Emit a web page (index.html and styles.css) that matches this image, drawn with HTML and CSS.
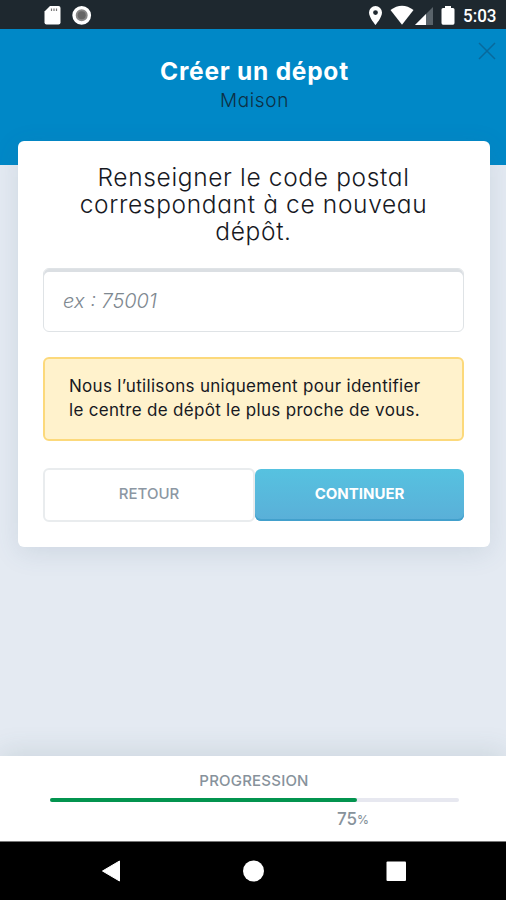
FILE: index.html
```html
<!DOCTYPE html>
<html lang="fr">
<head>
    <meta charset="UTF-8">
    <meta name="viewport" content="width=device-width, initial-scale=1.0">
    <title>Créer un dépot</title>
    <link rel="stylesheet" href="styles.css">
</head>
<body>
    <div class="status-bar">
        <svg width="506" height="29" viewBox="0 0 506 29">
            <path fill="#fff" d="M50 6h8.500q2 0 2 2v14.500q0 2-2 2h-12q-2 0-2-2V11.500z"/>
            <path stroke="#777" stroke-width="1.200" d="M51.500 8.500v2.500M54 8.500v2.500M56.500 8.500v2.500"/>
            <circle cx="81.700" cy="15.300" r="7.700" fill="#888" stroke="#fff" stroke-width="3.400"/>
            <circle cx="81.700" cy="15.300" r="4" fill="#666"/>
            <path fill="#fff" fill-rule="evenodd" d="M375.500 6a6.500 6.500 0 0 0-6.500 6.500c0 5 6.500 12.500 6.500 12.500s6.500-7.500 6.500-12.500a6.500 6.500 0 0 0-6.500-6.500zm0 4.200a2.400 2.400 0 1 1 0 4.800 2.400 2.400 0 0 1 0-4.800z"/>
            <path fill="#fff" d="M390.500 10q11.500-8.500 23 0L402 24.800z"/>
            <path fill="#59636a" d="M433 7v18h-18z"/>
            <path fill="#fff" d="M426 14v11h-11z"/>
            <path fill="#fff" d="M445 6h6v2h2q1.500 0 1.500 1.500V23q0 1.800-1.500 1.800h-10q-1.500 0-1.500-1.800V9.500Q441.500 8 443 8h2z"/>
            <text class="clock" x="463" y="22.300" textLength="33.500" lengthAdjust="spacingAndGlyphs">5:03</text>
        </svg>
    </div>

    <header class="header">
        <button class="close" aria-label="Fermer">
            <svg width="18" height="18" viewBox="0 0 18 18">
                <path d="M1 1l16 16M17 1L1 17" stroke="#08699c" stroke-width="1.500"/>
            </svg>
        </button>
        <h1>Créer un dépot</h1>
        <p>Maison</p>
    </header>

    <main class="card">
        <h2>Renseigner le code postal<br>correspondant à ce nouveau<br>dépôt.</h2>
        <input type="text" class="field" placeholder="ex : 75001">
        <div class="notice">Nous l’utilisons uniquement pour identifier<br>le centre de dépôt le plus proche de vous.</div>
        <div class="actions">
            <button class="btn btn-back">RETOUR</button>
            <button class="btn btn-next">CONTINUER</button>
        </div>
    </main>

    <footer class="progress">
        <div class="progress-title">PROGRESSION</div>
        <div class="track">
            <div class="bar" style="width: 75%"></div>
        </div>
        <div class="progress-value">75<small>%</small></div>
    </footer>

    <nav class="nav-bar">
        <svg width="506" height="58" viewBox="0 0 506 58">
            <path d="M119.500 19v20L102.500 29z" fill="#fff" stroke="#fff" stroke-linejoin="round"/>
            <circle cx="253.500" cy="29" r="10.500" fill="#fff"/>
            <rect x="386.500" y="19.500" width="19.500" height="19.500" rx="1" fill="#fff"/>
        </svg>
    </nav>
</body>
</html>
```
FILE: styles.css
```css
* {
    box-sizing: border-box;
}
body {
    margin: 0;
    height: 900px;
    display: flex;
    flex-direction: column;
    overflow: hidden;
    background-color: #e4eaf2;
    font-family: Inter, "Liberation Sans", sans-serif;
    font-feature-settings: "cv11";
    color: #17191f;
}
.status-bar {
    height: 29px;
    background-color: #1e282f;
}
.status-bar svg,
.nav-bar svg {
    display: block;
}
.clock {
    font-family: Roboto, sans-serif;
    font-size: 18px;
    font-weight: 500;
    fill: #fff;
}
.header {
    position: relative;
    height: 136px;
    padding-top: 27px;
    background-color: #0088c7;
    text-align: center;
}
.header h1 {
    margin: 0 0 0 3px;
    font-size: 24.5px;
    line-height: 30px;
    font-weight: 700;
    letter-spacing: 0.75px;
    color: #fff;
}
.header p {
    margin: 2px 0 0 3px;
    font-size: 19px;
    line-height: 26px;
    font-weight: 300;
    letter-spacing: 0.6px;
    color: #0d3045;
}
.close {
    position: absolute;
    top: 13px;
    right: 10px;
    padding: 0;
    border: none;
    background: none;
}
.close svg {
    display: block;
}
.card {
    position: relative;
    height: 406px;
    margin: -24px 16px 0 18px;
    padding: 23px 26px 0 25px;
    background-color: #fff;
    border-radius: 6px;
    box-shadow: 0 6px 26px rgba(60, 90, 120, 0.13);
}
.card h2 {
    margin: 0;
    font-size: 24.5px;
    line-height: 27px;
    font-weight: 300;
    letter-spacing: 0.65px;
    text-align: center;
    white-space: nowrap;
}
.field {
    display: block;
    width: 100%;
    height: 64px;
    margin: 23px 0 25px;
    padding: 2px 19px 0;
    border: 1px solid #dfe3e6;
    border-radius: 6px;
    box-shadow: inset 0 3px 0 #dbdfe3;
    font: italic 300 20px Inter, "Liberation Sans", sans-serif;
    font-feature-settings: "cv11";
}
.field::placeholder {
    color: #7e8890;
}
.notice {
    height: 84px;
    padding: 15px 24px;
    border: 2px solid #fcd97b;
    border-radius: 6px;
    background-color: #fff2cc;
    font-size: 17px;
    line-height: 24px;
    letter-spacing: 0.31px;
    white-space: nowrap;
}
.actions {
    display: flex;
    align-items: center;
    height: 54px;
    margin-top: 27px;
}
.btn {
    padding: 0 0 3px;
    border-radius: 6px;
    font-family: inherit;
    font-size: 15px;
}
.btn-back {
    width: 212px;
    height: 54px;
    border: 2px solid #e9ecee;
    background-color: #fff;
    font-weight: 500;
    color: #8c97a3;
}
.btn-next {
    width: 209px;
    height: 52px;
    border: none;
    background: linear-gradient(#56c2e0, #5aafd8);
    box-shadow: inset 0 -2px 0 #42a0cc;
    font-weight: 700;
    color: #fff;
}
.progress {
    height: 86px;
    margin-top: auto;
    padding: 15px 47px 0 50px;
    border-bottom: 1px solid #777;
    background-color: #fff;
    box-shadow: 0 -4px 26px rgba(60, 90, 100, 0.14);
    color: #87929b;
}
.progress-title {
    margin-left: -1px;
    font-size: 15px;
    line-height: 20px;
    font-weight: 500;
    letter-spacing: 0.2px;
    text-align: center;
}
.track {
    height: 4px;
    margin-top: 7px;
    border-radius: 2px;
    background-color: #e7e8f0;
}
.bar {
    height: 4px;
    border-radius: 2px;
    background-color: #03944f;
}
.progress-value {
    margin: 7px 0 0 287px;
    font-size: 17px;
    line-height: 20px;
    font-weight: 500;
}
.progress-value small {
    font-size: 12px;
    vertical-align: 1px;
}
.nav-bar {
    height: 58px;
    background-color: #000;
}
```
